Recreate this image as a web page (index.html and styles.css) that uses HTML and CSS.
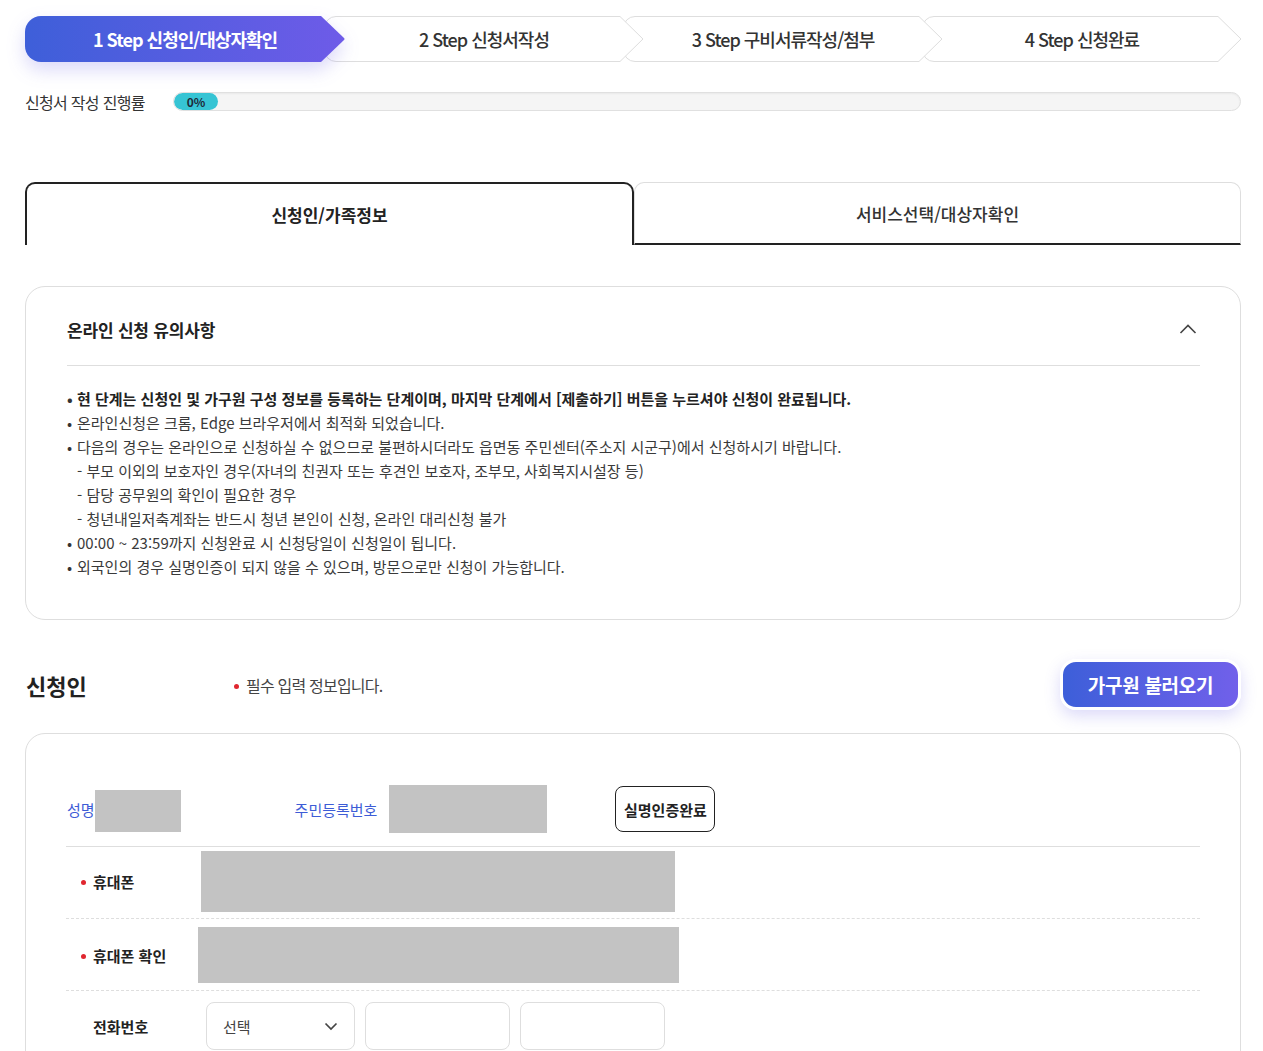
FILE: index.html
```html
<!DOCTYPE html>
<html lang="ko">
<head>
    <meta charset="UTF-8">
    <meta name="viewport" content="width=device-width, initial-scale=1.0">
    <title>신청인/대상자확인</title>
    <link rel="stylesheet" href="styles.css">
</head>
<body>
    <div class="container">
        <!-- 단계 표시 -->
        <ol class="steps">
            <li class="step active">
                <svg class="step-shape" viewBox="0 0 320 46">
                    <defs>
                        <linearGradient id="stepGrad" x1="0" x2="1" y1="0" y2="0">
                            <stop offset="0" stop-color="#3e5fd9"/>
                            <stop offset="1" stop-color="#6e5be8"/>
                        </linearGradient>
                    </defs>
                    <path d="M16 0 H296 L319 22 Q320 23 319 24 L296 46 H16 A16 16 0 0 1 0 30 V16 A16 16 0 0 1 16 0 Z" fill="url(#stepGrad)"/>
                </svg>
                <span class="step-label">1 Step 신청인/대상자확인</span>
            </li>
            <li class="step">
                <svg class="step-shape" viewBox="0 0 320 46">
                    <path d="M12 .5 H296 L319 23 L296 45.5 H12 A11.5 11.5 0 0 1 .5 34 V12 A11.5 11.5 0 0 1 12 .5 Z" fill="#fff" stroke="#dedede" stroke-linejoin="round"/>
                </svg>
                <span class="step-label">2 Step 신청서작성</span>
            </li>
            <li class="step">
                <svg class="step-shape" viewBox="0 0 320 46">
                    <path d="M12 .5 H296 L319 23 L296 45.5 H12 A11.5 11.5 0 0 1 .5 34 V12 A11.5 11.5 0 0 1 12 .5 Z" fill="#fff" stroke="#dedede" stroke-linejoin="round"/>
                </svg>
                <span class="step-label">3 Step 구비서류작성/첨부</span>
            </li>
            <li class="step">
                <svg class="step-shape" viewBox="0 0 320 46">
                    <path d="M12 .5 H296 L319 23 L296 45.5 H12 A11.5 11.5 0 0 1 .5 34 V12 A11.5 11.5 0 0 1 12 .5 Z" fill="#fff" stroke="#dedede" stroke-linejoin="round"/>
                </svg>
                <span class="step-label">4 Step 신청완료</span>
            </li>
        </ol>

        <div class="progress">
            <span class="progress-title">신청서 작성 진행률</span>
            <div class="progress-track">
                <div class="progress-fill">0%</div>
            </div>
        </div>

        <div class="tabs">
            <div class="tab active">신청인/가족정보</div>
            <div class="tab">서비스선택/대상자확인</div>
        </div>

        <!-- 유의사항 -->
        <section class="notice">
            <div class="notice-head">
                <h3>온라인 신청 유의사항</h3>
                <svg class="notice-toggle" width="18" height="10" viewBox="0 0 18 10">
                    <polyline points="1.5,9 9,1.5 16.5,9" fill="none" stroke="#444" stroke-width="1.6"/>
                </svg>
            </div>
            <ul class="notice-list">
                <li class="strong">현 단계는 신청인 및 가구원 구성 정보를 등록하는 단계이며, 마지막 단계에서 [제출하기] 버튼을 누르셔야 신청이 완료됩니다.</li>
                <li>온라인신청은 크롬, Edge 브라우저에서 최적화 되었습니다.</li>
                <li>다음의 경우는 온라인으로 신청하실 수 없으므로 불편하시더라도 읍면동 주민센터(주소지 시군구)에서 신청하시기 바랍니다.</li>
                <li class="sub">- 부모 이외의 보호자인 경우(자녀의 친권자 또는 후견인 보호자, 조부모, 사회복지시설장 등)</li>
                <li class="sub">- 담당 공무원의 확인이 필요한 경우</li>
                <li class="sub">- 청년내일저축계좌는 반드시 청년 본인이 신청, 온라인 대리신청 불가</li>
                <li>00:00 ~ 23:59까지 신청완료 시 신청당일이 신청일이 됩니다.</li>
                <li>외국인의 경우 실명인증이 되지 않을 수 있으며, 방문으로만 신청이 가능합니다.</li>
            </ul>
        </section>

        <div class="section-head">
            <h2>신청인</h2>
            <p class="required-note">필수 입력 정보입니다.</p>
            <button class="btn-load" type="button">가구원 불러오기</button>
        </div>

        <!-- 신청인 정보 -->
        <div class="form-box">
            <div class="row row-id">
                <span class="id-label">성명</span>
                <div class="mask mask-name"></div>
                <span class="id-label rrn">주민등록번호</span>
                <div class="mask mask-rrn"></div>
                <button class="btn-verify" type="button">실명인증완료</button>
            </div>
            <div class="row row-phone">
                <div class="row-label req">휴대폰</div>
                <div class="mask mask-phone"></div>
            </div>
            <div class="row row-phone2">
                <div class="row-label req">휴대폰 확인</div>
                <div class="mask mask-phone2"></div>
            </div>
            <div class="row row-tel">
                <div class="row-label">전화번호</div>
                <div class="select">
                    <span>선택</span>
                    <svg width="14" height="9" viewBox="0 0 14 9">
                        <polyline points="1.5,1.5 7,7 12.5,1.5" fill="none" stroke="#444" stroke-width="1.7"/>
                    </svg>
                </div>
                <input class="input" type="text">
                <input class="input" type="text">
            </div>
        </div>
    </div>
</body>
</html>
```

FILE: styles.css
```css
body {
    margin: 0;
    padding: 0;
    background: #fff;
    color: #333;
    font-family: "Noto Sans CJK KR", "Noto Sans", sans-serif;
}

.container {
    width: 1216px;
    margin-left: 25px;
    padding-bottom: 60px;
}

/* 단계 */
.steps {
    display: flex;
    list-style: none;
    margin: 16px 0 0;
    padding: 0;
    height: 46px;
}

.step {
    display: grid;
    width: 320px;
    margin-right: -21px;
    position: relative;
}

.step:nth-child(1) { z-index: 4; }
.step:nth-child(2) { z-index: 3; }
.step:nth-child(3) { z-index: 2; }
.step:nth-child(4) { z-index: 1; }

.step-shape,
.step-label {
    grid-area: 1 / 1;
}

.step-shape {
    display: block;
    width: 320px;
    height: 46px;
    overflow: visible;
}

.step.active .step-shape {
    filter: drop-shadow(0 8px 9px rgba(92, 84, 226, 0.22));
}

.step-label {
    position: relative;
    z-index: 1;
    align-self: center;
    justify-self: center;
    font-size: 18px;
    font-weight: 500;
    letter-spacing: -1px;
    color: #333;
}

.step.active .step-label {
    color: #fff;
    font-weight: 700;
}

/* 진행률 */
.progress {
    display: flex;
    align-items: center;
    margin-top: 30px;
    height: 19px;
}

.progress-title {
    width: 148px;
    font-size: 16px;
    letter-spacing: -0.7px;
    color: #333;
}

.progress-track {
    flex: 1;
    height: 19px;
    box-sizing: border-box;
    border: 1px solid #e0e0e0;
    background: #f5f5f5;
    border-radius: 10px;
    overflow: hidden;
    box-shadow: inset 0 1px 2px rgba(0,0,0,0.05);
}

.progress-fill {
    width: 44px;
    height: 100%;
    background: #36c4d4;
    border-radius: 10px;
    text-align: center;
    font-size: 12px;
    font-weight: 700;
    line-height: 17px;
    color: #1e2a38;
}

/* 탭 */
.tabs {
    display: flex;
    margin-top: 71px;
}

.tab {
    flex: 1;
    height: 63px;
    box-sizing: border-box;
    display: flex;
    align-items: center;
    justify-content: center;
    font-size: 17px;
    font-weight: 500;
    color: #333;
    border: 1px solid #dedede;
    border-bottom: 2px solid #222;
    border-radius: 10px 10px 0 0;
}

.tab.active {
    border: 2px solid #222;
    border-bottom: none;
    font-weight: 700;
    color: #222;
}

/* 유의사항 */
.notice {
    margin-top: 41px;
    border: 1px solid #dedede;
    border-radius: 20px;
    padding: 0 40px 40px 41px;
}

.notice-head {
    display: flex;
    align-items: center;
    justify-content: space-between;
    height: 79px;
    box-sizing: border-box;
    padding-top: 6px;
    border-bottom: 1px solid #dedede;
}

.notice-head h3 {
    margin: 0;
    font-size: 17px;
    font-weight: 700;
    letter-spacing: -0.2px;
    color: #222;
}

.notice-toggle {
    margin-right: 3px;
}

.notice-list {
    list-style: none;
    margin: 0;
    padding: 21px 0 0;
    font-size: 15px;
    line-height: 24px;
    color: #3a3a3a;
}

.notice-list li {
    padding-left: 10px;
}

.notice-list li::before {
    content: "•";
    display: inline-block;
    width: 10px;
    margin-left: -10px;
    color: #333;
}

.notice-list li.sub::before {
    content: none;
}

.notice-list li.strong {
    font-weight: 700;
    color: #222;
}

/* 신청인 헤더 */
.section-head {
    display: flex;
    align-items: center;
    margin-top: 39px;
    height: 51px;
}

.section-head h2 {
    margin: 0 0 0 1px;
    width: 208px;
    font-size: 22px;
    font-weight: 700;
    color: #222;
}

.required-note {
    margin: 0;
    font-size: 16px;
    letter-spacing: -0.8px;
    color: #444;
}

.required-note::before {
    content: "";
    display: inline-block;
    width: 5px;
    height: 5px;
    border-radius: 50%;
    background: #e0262f;
    margin-right: 7px;
    vertical-align: middle;
    position: relative;
    top: -1px;
}

.btn-load {
    margin-left: auto;
    width: 181px;
    height: 51px;
    border: 3px solid #fff;
    border-radius: 16px;
    background: linear-gradient(90deg, #3d5fd9, #7160ea);
    color: #fff;
    font-family: inherit;
    font-size: 19px;
    font-weight: 700;
    letter-spacing: -0.3px;
    box-shadow: 0 6px 16px rgba(96, 86, 226, 0.22);
    cursor: pointer;
}

/* 폼 */
.form-box {
    margin-top: 23px;
    border: 1px solid #dedede;
    border-radius: 20px;
    padding: 0 40px 40px;
}

.row {
    display: flex;
    align-items: center;
}

.row-id {
    height: 46px;
    padding: 52px 0 14px;
    border-bottom: 1px solid #dedede;
}

.id-label {
    margin-left: 1px;
    font-size: 15px;
    color: #3d5cd6;
}

.id-label.rrn {
    margin-left: 114px;
    margin-right: 12px;
}

.mask {
    background: #c3c3c3;
}

.mask-name {
    width: 86px;
    height: 42px;
    margin-top: 4px;
}

.mask-rrn {
    width: 158px;
    height: 48px;
}

.btn-verify {
    margin-left: 68px;
    width: 100px;
    height: 46px;
    border: 1px solid #222;
    border-radius: 8px;
    background: #fff;
    font-family: inherit;
    font-size: 15px;
    font-weight: 700;
    color: #222;
    padding: 0;
}

.row-phone {
    padding: 4px 0 6px;
    border-bottom: 1px dashed #dedede;
}

.row-phone2 {
    padding: 8px 0 7px;
    border-bottom: 1px dashed #dedede;
}

.row-tel {
    padding-top: 11px;
    gap: 10px;
}

.row-label {
    box-sizing: border-box;
    padding-left: 27px;
    font-size: 15px;
    font-weight: 700;
    color: #222;
}

.row-label.req {
    padding-left: 15px;
}

.row-label.req::before {
    content: "";
    display: inline-block;
    width: 5px;
    height: 5px;
    border-radius: 50%;
    background: #e0262f;
    margin-right: 7px;
    vertical-align: middle;
    position: relative;
    top: -1px;
}

.row-phone .row-label { width: 135px; }
.row-phone2 .row-label { width: 132px; }
.row-tel .row-label { width: 130px; }

.mask-phone {
    width: 474px;
    height: 61px;
}

.mask-phone2 {
    width: 481px;
    height: 56px;
}

.select {
    display: flex;
    align-items: center;
    justify-content: space-between;
    box-sizing: border-box;
    width: 149px;
    height: 48px;
    padding: 0 16px 0 16px;
    border: 1px solid #dedede;
    border-radius: 8px;
    font-size: 15px;
    color: #444;
}

.input {
    box-sizing: border-box;
    width: 145px;
    height: 48px;
    border: 1px solid #dedede;
    border-radius: 8px;
    font-family: inherit;
    font-size: 15px;
}
```
